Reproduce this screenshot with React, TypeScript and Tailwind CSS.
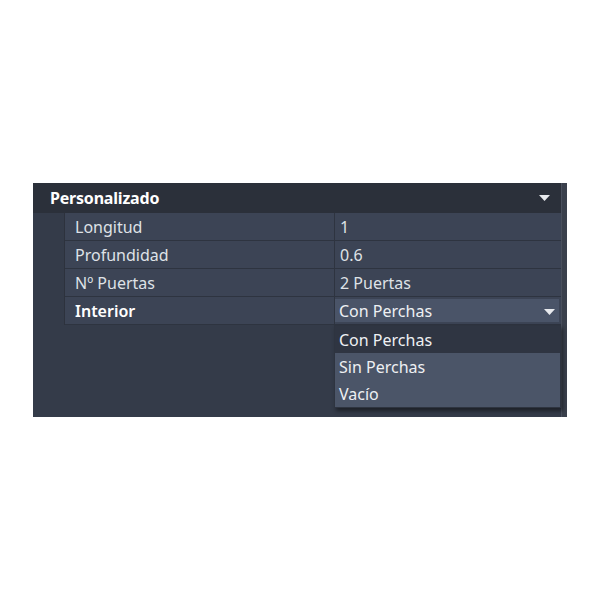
const font = { fontFamily: '"Noto Sans", "Open Sans", sans-serif' };

function Caret({ className }: { className?: string }) {
  return (
    <svg width="11" height="6" viewBox="0 0 11 6" className={className}>
      <path d="M0 0 H11 L5.5 6 Z" fill="#e8eaee" />
    </svg>
  );
}

const rows = [
  { label: "Longitud", value: "1" },
  { label: "Profundidad", value: "0.6" },
  { label: "Nº Puertas", value: "2 Puertas" },
];

const options = ["Con Perchas", "Sin Perchas", "Vacío"];

export default function App() {
  return (
    <div className="w-[600px] h-[600px] bg-white pt-[183px] pl-[33px]" style={font}>
      <div className="relative flex w-[534px] h-[234px] bg-[#343b49]">
        <div className="flex flex-col w-[528px]">
          {/* header */}
          <div className="flex items-center justify-between h-[30px] bg-[#2b303a] pl-[17px] pr-[11px]">
            <span className="text-[16px] font-bold text-white tracking-[-0.2px]">Personalizado</span>
            <Caret />
          </div>
          {/* property rows */}
          <div className="flex">
            <div className="w-[32px] border-r border-[#2d323d]" />
            <div className="flex flex-col w-[496px]">
              {rows.map((r) => (
                <div key={r.label} className="flex h-[28px] bg-[#3c4455] border-b border-[#2e3440] text-[16px] text-[#dfe2e7]">
                  <div className="w-[270px] pl-[10px] flex items-center border-r border-[#2e3440]">{r.label}</div>
                  <div className="flex-1 pl-[5px] flex items-center">{r.value}</div>
                </div>
              ))}
              <div className="flex h-[28px] bg-[#3c4455] border-b border-[#2e3440] text-[16px]">
                <div className="w-[270px] pl-[10px] flex items-center border-r border-[#2e3440] text-white font-semibold">Interior</div>
                <div className="flex-1 py-[2px] pr-[2px]">
                  <div className="h-full flex items-center justify-between bg-[#4a5468] pl-[4px] pr-[4px] text-[#eef0f3]">
                    <span>Con Perchas</span>
                    <Caret className="mt-[2px]" />
                  </div>
                </div>
              </div>
            </div>
          </div>
        </div>
        <div className="w-[6px] border-l border-[#4a505d] bg-[#3a404c]" />
        {/* open dropdown list */}
        <div className="absolute left-[301px] top-[142px] w-[227px] bg-[#4b5568] border border-[#2e3440] shadow-[2px_3px_4px_rgba(0,0,0,0.45)] text-[16px] text-[#eef0f3]">
          {options.map((o, i) => (
            <div key={o} className={`h-[27px] flex items-center pl-[4px] ${i === 0 ? "bg-[#2f3542]" : ""}`}>
              {o}
            </div>
          ))}
        </div>
      </div>
    </div>
  );
}
